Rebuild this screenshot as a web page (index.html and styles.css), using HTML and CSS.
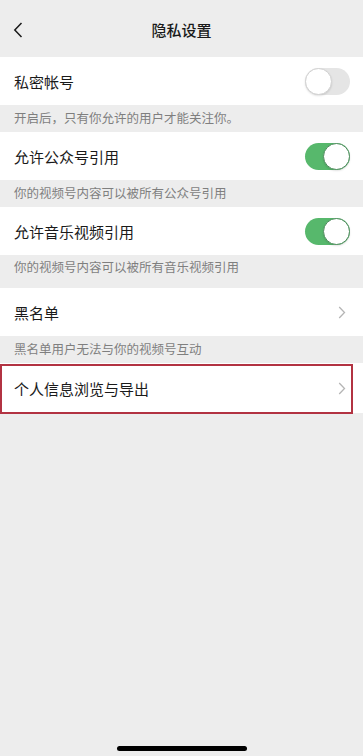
FILE: index.html
```html
<!DOCTYPE html>
<html lang="zh-CN">
<head>
    <meta charset="UTF-8">
    <meta name="viewport" content="width=device-width, initial-scale=1.0">
    <title>隐私设置</title>
    <link rel="stylesheet" href="styles.css">
</head>
<body>
    <div class="nav-bar">
        <span class="back">
            <svg width="10" height="16" viewBox="0 0 10 16"><path d="M8.5 1 L1.8 8 L8.5 15" fill="none" stroke="#1a1a1a" stroke-width="1.5"/></svg>
        </span>
        <h1 class="title">隐私设置</h1>
    </div>

    <div class="cell">
        <span class="cell-label">私密帐号</span>
        <span class="switch"></span>
    </div>
    <p class="tip">开启后，只有你允许的用户才能关注你。</p>

    <div class="cell">
        <span class="cell-label">允许公众号引用</span>
        <span class="switch on"></span>
    </div>
    <p class="tip">你的视频号内容可以被所有公众号引用</p>

    <div class="cell">
        <span class="cell-label">允许音乐视频引用</span>
        <span class="switch on"></span>
    </div>
    <p class="tip tall">你的视频号内容可以被所有音乐视频引用</p>

    <div class="cell">
        <span class="cell-label">黑名单</span>
        <span class="arrow"><svg width="8" height="13" viewBox="0 0 8 13"><path d="M1.2 1 L6.5 6.5 L1.2 12" fill="none" stroke="#b5b5b5" stroke-width="1.3"/></svg></span>
    </div>
    <p class="tip">黑名单用户无法与你的视频号互动</p>

    <div class="cell marked">
        <span class="cell-label">个人信息浏览与导出</span>
        <span class="arrow"><svg width="8" height="13" viewBox="0 0 8 13"><path d="M1.2 1 L6.5 6.5 L1.2 12" fill="none" stroke="#b5b5b5" stroke-width="1.3"/></svg></span>
        <span class="highlight"></span>
    </div>

    <div class="home-bar"></div>
</body>
</html>
```

FILE: styles.css
```css
html, body {
    height: 100%;
}
body {
    margin: 0;
    background: #ededed;
    font-family: "Noto Sans CJK SC", "Noto Sans", sans-serif;
    color: #1a1a1a;
    position: relative;
}
.nav-bar {
    height: 57px;
    display: flex;
    align-items: center;
    justify-content: center;
    position: relative;
}
.back {
    position: absolute;
    left: 13px;
    top: 22px;
    display: flex;
}
.title {
    margin: 0;
    font-size: 15px;
    font-weight: 500;
    line-height: 20px;
    padding-top: 3px;
}
.cell {
    height: 48px;
    background: #fff;
    display: flex;
    align-items: center;
    justify-content: space-between;
    padding: 0 13px 0 14px;
    position: relative;
}
.cell-label {
    font-size: 15px;
}
.tip {
    margin: 0;
    height: 27px;
    box-sizing: border-box;
    padding: 5px 14px 0;
    font-size: 12.5px;
    line-height: 15px;
    color: #7f7f7f;
}
.tip.tall {
    height: 33px;
    padding-top: 4px;
}
.switch {
    width: 45px;
    height: 27px;
    border-radius: 14px;
    background: #e5e5e5;
    position: relative;
    box-sizing: border-box;
}
.switch::after {
    content: "";
    position: absolute;
    left: 0;
    top: 0;
    width: 27px;
    height: 27px;
    border-radius: 50%;
    background: #fff;
    box-sizing: border-box;
    border: 1px solid #d2d2d2;
    box-shadow: 0 1px 2px rgba(0, 0, 0, 0.12);
}
.switch.on {
    background: #57b86c;
}
.switch.on::after {
    left: 18px;
    border-color: #4f8d5e;
}
.arrow {
    display: flex;
    margin-right: 4px;
}
.marked {
    height: 50px;
}
.highlight {
    position: absolute;
    left: 0;
    top: 1px;
    width: 353px;
    height: 50px;
    box-sizing: border-box;
    border: 2px solid #b23342;
}
.home-bar {
    position: absolute;
    left: 117px;
    bottom: 5px;
    width: 130px;
    height: 5px;
    border-radius: 3px;
    background: #000;
}
```
